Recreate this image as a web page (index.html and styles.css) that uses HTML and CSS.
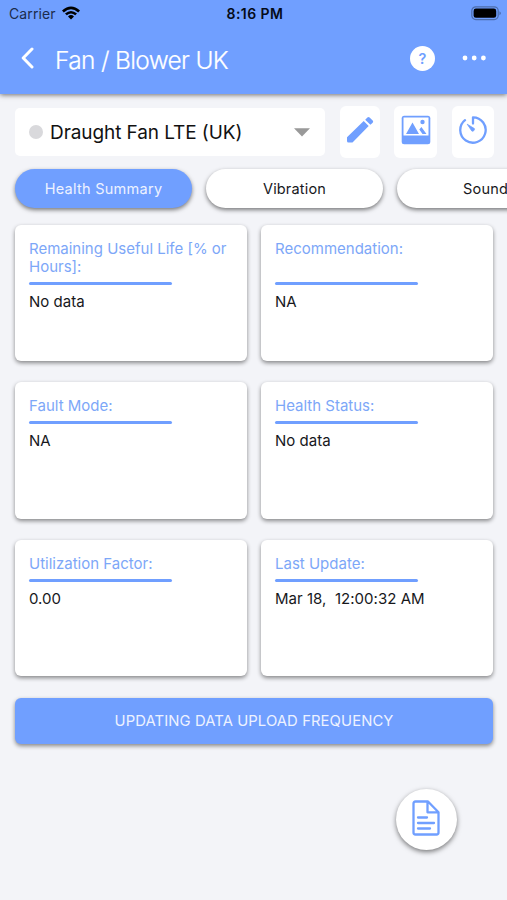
FILE: index.html
```html
<!DOCTYPE html>
<html lang="en">
<head>
<meta charset="utf-8">
<title>Fan / Blower UK</title>
<link rel="stylesheet" href="styles.css">
</head>
<body>
<header class="header">
  <div class="status">
    <div class="carrier"><span>Carrier</span>
      <svg width="18" height="14" viewBox="0 0 18 14"><path d="M0 4.6Q9-3.4 18 4.6L16.2 6.4Q9 .3 1.8 6.4ZM3 7.5Q9 2.4 15 7.5L13.2 9.3Q9 5.8 4.8 9.3ZM6 10.4Q9 7.8 12 10.4L9 13.6Z"/></svg>
    </div>
    <time class="clock">8:16 PM</time>
    <svg class="battery" width="31" height="15" viewBox="0 0 31 15"><rect x=".8" y=".8" width="26.4" height="12.8" rx="4" fill="none" stroke="#4c6dab" stroke-width="1.2"/><rect x="2.6" y="2.6" width="22.6" height="9.2" rx="2.3"/><path d="M28.6 5.2q2 2 0 4z" fill="#395386"/></svg>
  </div>
  <nav class="nav">
    <svg class="back" width="13" height="22" viewBox="0 0 13 22"><path d="M11 2 2.2 11 11 20" fill="none" stroke="#fff" stroke-width="3" stroke-linecap="round" stroke-linejoin="round"/></svg>
    <h1 class="title">Fan / Blower UK</h1>
    <span class="help">?</span>
    <svg width="24" height="6" viewBox="0 0 24 6" fill="#fff"><circle cx="3" cy="3" r="2.4"/><circle cx="12.2" cy="3" r="2.4"/><circle cx="21.4" cy="3" r="2.4"/></svg>
  </nav>
</header>
<main class="main">
  <div class="toolbar">
    <div class="select"><span class="dot"></span><span class="device">Draught Fan LTE (UK)</span>
      <svg width="16" height="9" viewBox="0 0 16 9"><path d="M0 .3h16L8 8.6z" fill="#999"/></svg>
    </div>
    <div class="tool pencil"><svg width="28" height="28" viewBox="0 0 28 28" fill="#709fff"><path d="M1 21.2 17.7 5.1 22.7 10.1 6.5 26.5H2.5Q1 26.5 1 25ZM19.2 3.7 21.4 1.5Q22.5.5 23.6 1.5L26.7 4.6Q27.7 5.6 26.7 6.7L24.4 8.8Z"/></svg></div>
    <div class="tool photo"><svg width="30" height="30" viewBox="0 0 30 30"><rect x=".7" y=".7" width="28.6" height="28.6" rx="2.5" fill="#709fff"/><path d="M2.5 2.5h25v18h-25z" fill="#fff"/><path d="M5 19 11.5 7.5 18 19ZM18.3 14.5 20.4 12 25.5 19H21.5Z" fill="#709fff"/><circle cx="21.5" cy="7" r="2.2" fill="#709fff"/></svg></div>
    <div class="tool timer"><svg width="30" height="30" viewBox="0 0 30 30"><path d="M7 5.1A12.7 12.7 0 1 0 15 2.3V8.5" fill="none" stroke="#709fff" stroke-width="2.3" stroke-linecap="round" stroke-linejoin="round"/><path d="M9.2 9.2 16.4 13.6A2 2 0 0 1 13.9 16.1Z" fill="#709fff" stroke="#709fff" stroke-width=".8" stroke-linejoin="round"/></svg></div>
  </div>
  <div class="tabs">
    <div class="tab active">Health Summary</div>
    <div class="tab">Vibration</div>
    <div class="tab">Sound</div>
  </div>
  <section class="cards">
    <article class="card"><h2>Remaining Useful Life [% or<br>Hours]:</h2><hr><p>No data</p></article>
    <article class="card"><h2 class="tall">Recommendation:</h2><hr><p>NA</p></article>
    <article class="card"><h2>Fault Mode:</h2><hr><p>NA</p></article>
    <article class="card"><h2>Health Status:</h2><hr><p>No data</p></article>
    <article class="card"><h2>Utilization Factor:</h2><hr><p>0.00</p></article>
    <article class="card"><h2>Last Update:</h2><hr><p>Mar 18,&nbsp; 12:00:32 AM</p></article>
  </section>
  <button class="update">UPDATING DATA UPLOAD FREQUENCY</button>
</main>
<div class="fab"><svg width="28" height="36" viewBox="0 0 28 36" fill="none" stroke="#709fff" stroke-width="2.3" stroke-linejoin="round" stroke-linecap="round"><path d="M16 1.5H3.5Q1.5 1.5 1.5 3.5V32.5Q1.5 34.5 3.5 34.5H24.5Q26.5 34.5 26.5 32.5V12.3ZM15.5 1.5V12.3H26.5M6 17.5H15M6 23H22M6 28.5H18"/></svg></div>
</body>
</html>
```
FILE: styles.css
```css
* { box-sizing: border-box; }
body { margin: 0; height: 900px; overflow: hidden; background: #f3f4f8; font-family: Inter, "Liberation Sans", sans-serif; color: #17181c; }
svg { display: block; flex: none; }
.header { height: 94px; background: #709fff; box-shadow: 0 1px 5px rgba(0,0,0,.55); }
.status { height: 28px; display: grid; grid-template-columns: 1fr auto 1fr; align-items: center; padding: 0 5px 0 9px; color: #1c2c4c; }
.carrier { display: flex; align-items: center; gap: 6px; font-size: 14px; letter-spacing: .1px; margin-top: -1px; }
.carrier svg { fill: #000; margin-top: -2px; }
.clock { font-size: 14px; font-weight: 600; color: #050b18; letter-spacing: .45px; margin-top: -1px; padding-right: 1px; }
.battery { justify-self: end; margin-top: -2px; }
.nav { height: 60px; display: flex; align-items: center; padding: 0 21px; }
.title { margin: 0 auto 0 21px; color: #fff; font-size: 24.5px; font-weight: 300; letter-spacing: -.67px; line-height: 30px; padding-top: 3px; -webkit-text-stroke: .2px #fff; }
.help { width: 25px; height: 25px; border-radius: 50%; background: #fff; color: #709fff; font-size: 14.5px; font-weight: 600; line-height: 25px; text-align: center; margin-right: 27px; }
.main { padding: 12px 14px 0 15px; }
.toolbar { display: flex; align-items: center; height: 52px; }
.select { flex: none; width: 310px; height: 48px; background: #fff; border-radius: 5px; display: flex; align-items: center; padding: 0 15px 0 14px; margin-right: 15px; }
.dot { width: 14px; height: 14px; border-radius: 50%; background: #d9d9dc; margin-right: 7px; }
.device { flex: 1; font-size: 19px; letter-spacing: -.08px; color: #111; white-space: nowrap; }
.tool { flex: none; height: 52px; background: #fff; border-radius: 6px; display: grid; place-items: center; padding-bottom: 4px; }
.pencil { width: 40px; margin-right: 14px; }
.photo { width: 43px; margin-right: 15px; }
.timer { width: 42px; }
.tabs { display: flex; gap: 14px; margin: 3px -14px 9px -15px; padding: 8px 0 8px 15px; height: 55px; overflow: hidden; }
.tab { flex: none; width: 177px; border-radius: 20px; background: #fff; box-shadow: 0 2px 4px rgba(0,0,0,.5); font-size: 14.5px; letter-spacing: .17px; line-height: 39px; text-align: center; }
.tab.active { background: #709fff; color: #edf2ff; letter-spacing: .27px; }
.cards { display: grid; grid-template-columns: 232px 232px; column-gap: 14px; row-gap: 21px; grid-auto-rows: 136.4px; }
.card { background: #fff; border-radius: 6px; box-shadow: 0 2px 4px rgba(0,0,0,.45); padding: 15px 14px; }
.card h2 { margin: 0; color: #7da7f8; font-size: 15px; font-weight: 400; line-height: 18px; letter-spacing: 0; white-space: nowrap; }
.card .tall { height: 36px; }
.card hr { width: 143px; height: 3px; border: 0; border-radius: 2px; background: #709fff; margin: 6px 0 7px; }
.card p { margin: 0; font-size: 15px; line-height: 20px; letter-spacing: .03px; white-space: nowrap; }
.update { display: block; width: 478px; height: 46px; margin: 21.8px 0 0; padding: 0; border: 0; border-radius: 6px; background: #709fff; color: #edf2ff; box-shadow: 0 2px 4px rgba(0,0,0,.45); font: 14.8px Inter, sans-serif; letter-spacing: .1px; }
.fab { position: absolute; left: 395.5px; top: 788.5px; width: 61px; height: 61px; border-radius: 50%; background: #fff; box-shadow: 0 2px 5px rgba(0,0,0,.5); display: grid; place-items: center; padding-bottom: 3px; }
```
